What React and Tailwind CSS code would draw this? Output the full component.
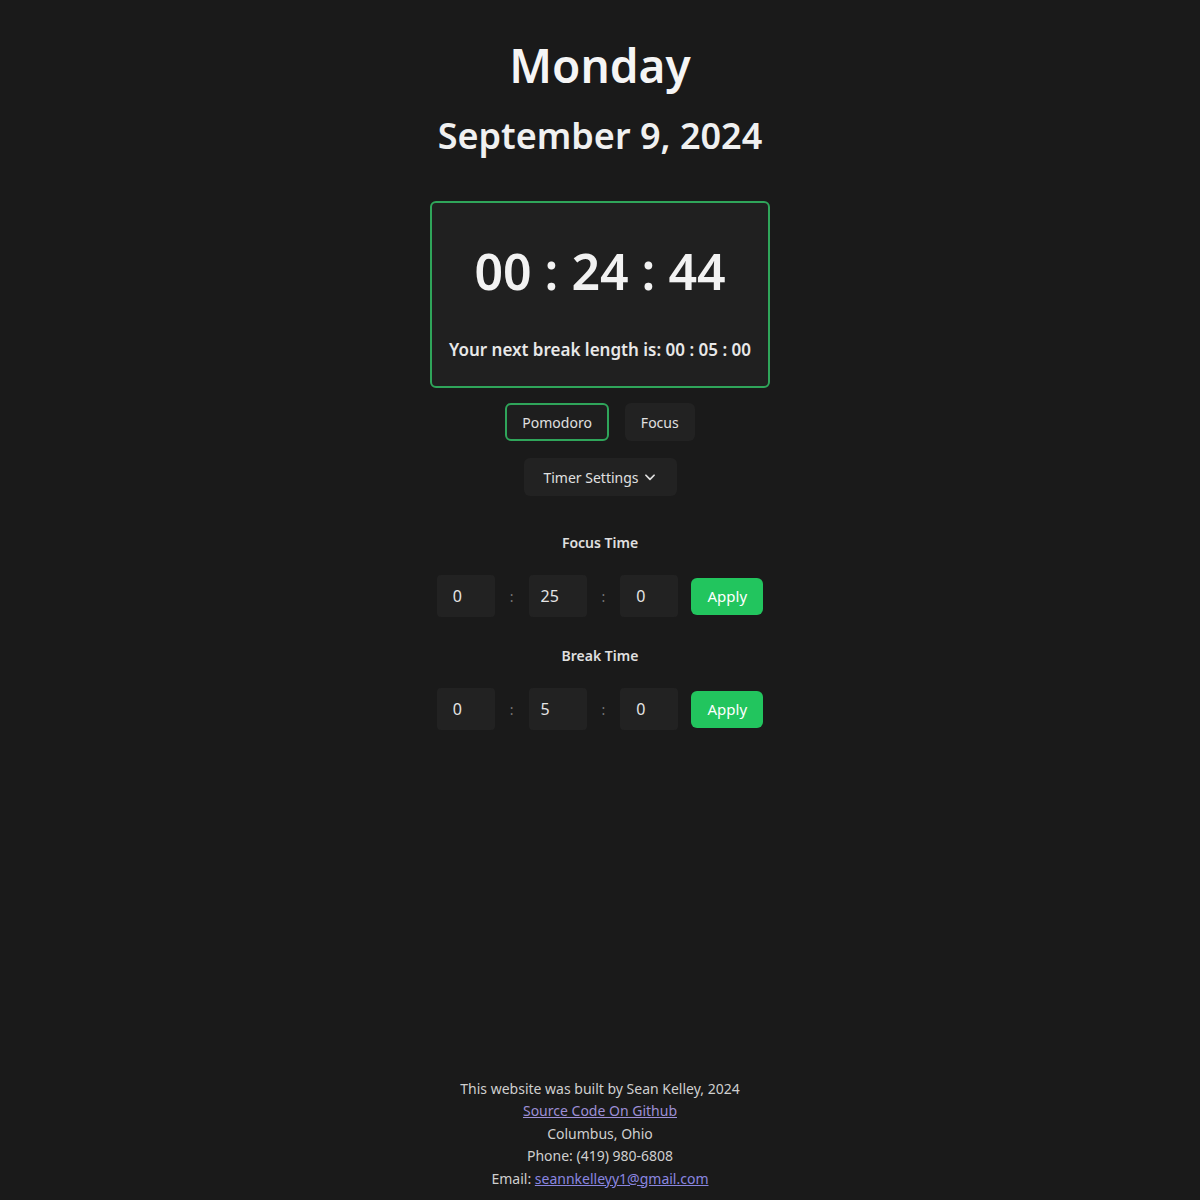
import React, { useState } from "react";

const FONT = { fontFamily: '"Noto Sans", Lato, sans-serif' };

function TimeInputs({ values }) {
  return (
    <div className="flex items-center justify-center gap-[15px]">
      <input
        defaultValue={values[0]}
        className="w-[58px] h-[42px] rounded bg-[#222222] px-4 text-[16px] text-[#e5e5e5] outline-none"
      />
      <span className="text-[14px] text-[#777777]">:</span>
      <input
        defaultValue={values[1]}
        className="w-[58px] h-[42px] rounded bg-[#222222] px-3 text-[16px] text-[#e5e5e5] outline-none"
      />
      <span className="text-[14px] text-[#777777]">:</span>
      <input
        defaultValue={values[2]}
        className="w-[58px] h-[42px] rounded bg-[#222222] px-4 text-[16px] text-[#e5e5e5] outline-none"
      />
      <button className="ml-[-2px] w-[72px] h-[37px] rounded-md bg-[#22c55e] text-[15px] text-white">
        Apply
      </button>
    </div>
  );
}

export default function App() {
  const [mode, setMode] = useState("pomodoro");

  return (
    <div
      className="min-h-screen bg-[#1a1a1a] text-white flex flex-col items-center"
      style={FONT}
    >
      <h1 className="mt-[33px] text-[46px] font-semibold leading-[64px] text-[#f5f5f5]">
        Monday
      </h1>
      <h2 className="mt-[15px] text-[36px] font-semibold leading-[48px] text-[#f0f0f0]">
        September 9, 2024
      </h2>

      <div className="mt-[41px] w-[340px] h-[187px] rounded-md border-2 border-[#2fa55a] bg-[#202020] flex flex-col items-center">
        <div className="mt-[38px] text-[50px] font-semibold leading-[60px] text-[#f2f2f2]">
          00 : 24 : 44
        </div>
        <div className="mt-[36px] text-[17px] font-semibold text-[#e8e8e8]">
          Your next break length is: 00 : 05 : 00
        </div>
      </div>

      <div className="mt-[15px] flex gap-4">
        <button
          onClick={() => setMode("pomodoro")}
          className={
            mode === "pomodoro"
              ? "h-[38px] px-[15px] rounded-md border-2 border-[#2fa55a] bg-[#1e1e1e] text-[14px] text-[#e0e0e0]"
              : "h-[38px] px-[15px] rounded-md border-2 border-transparent bg-[#222222] text-[14px] text-[#e0e0e0]"
          }
        >
          Pomodoro
        </button>
        <button
          onClick={() => setMode("focus")}
          className={
            mode === "focus"
              ? "h-[38px] px-[14px] rounded-md border-2 border-[#2fa55a] bg-[#1e1e1e] text-[14px] text-[#e0e0e0]"
              : "h-[38px] px-[14px] rounded-md border-2 border-transparent bg-[#222222] text-[14px] text-[#e0e0e0]"
          }
        >
          Focus
        </button>
      </div>

      <button className="mt-[17px] h-[38px] w-[153px] rounded-md bg-[#222222] text-[14px] text-[#e0e0e0] flex items-center justify-center gap-1">
        Timer Settings
        <svg width="14" height="14" viewBox="0 0 24 24" fill="none" stroke="currentColor" strokeWidth="3" strokeLinecap="round" strokeLinejoin="round">
          <path d="M5 9l7 7 7-7" />
        </svg>
      </button>

      <div className="mt-[36px] text-[14px] font-semibold text-[#e0e0e0]">Focus Time</div>
      <div className="mt-[22px]">
        <TimeInputs values={["0", "25", "0"]} />
      </div>

      <div className="mt-[28px] text-[14px] font-semibold text-[#e0e0e0]">Break Time</div>
      <div className="mt-[22px]">
        <TimeInputs values={["0", "5", "0"]} />
      </div>

      <footer className="mt-auto pb-[10px] pt-[300px] text-center text-[14px] leading-[22.5px] text-[#cfcfcf]">
        <div>This website was built by Sean Kelley, 2024</div>
        <div>
          <a href="#" className="underline text-[#9d8fd6]">Source Code On Github</a>
        </div>
        <div>Columbus, Ohio</div>
        <div>Phone: (419) 980-6808</div>
        <div>
          Email: <a href="#" className="underline text-[#8a86e0]">seannkelleyy1@gmail.com</a>
        </div>
      </footer>
    </div>
  );
}
